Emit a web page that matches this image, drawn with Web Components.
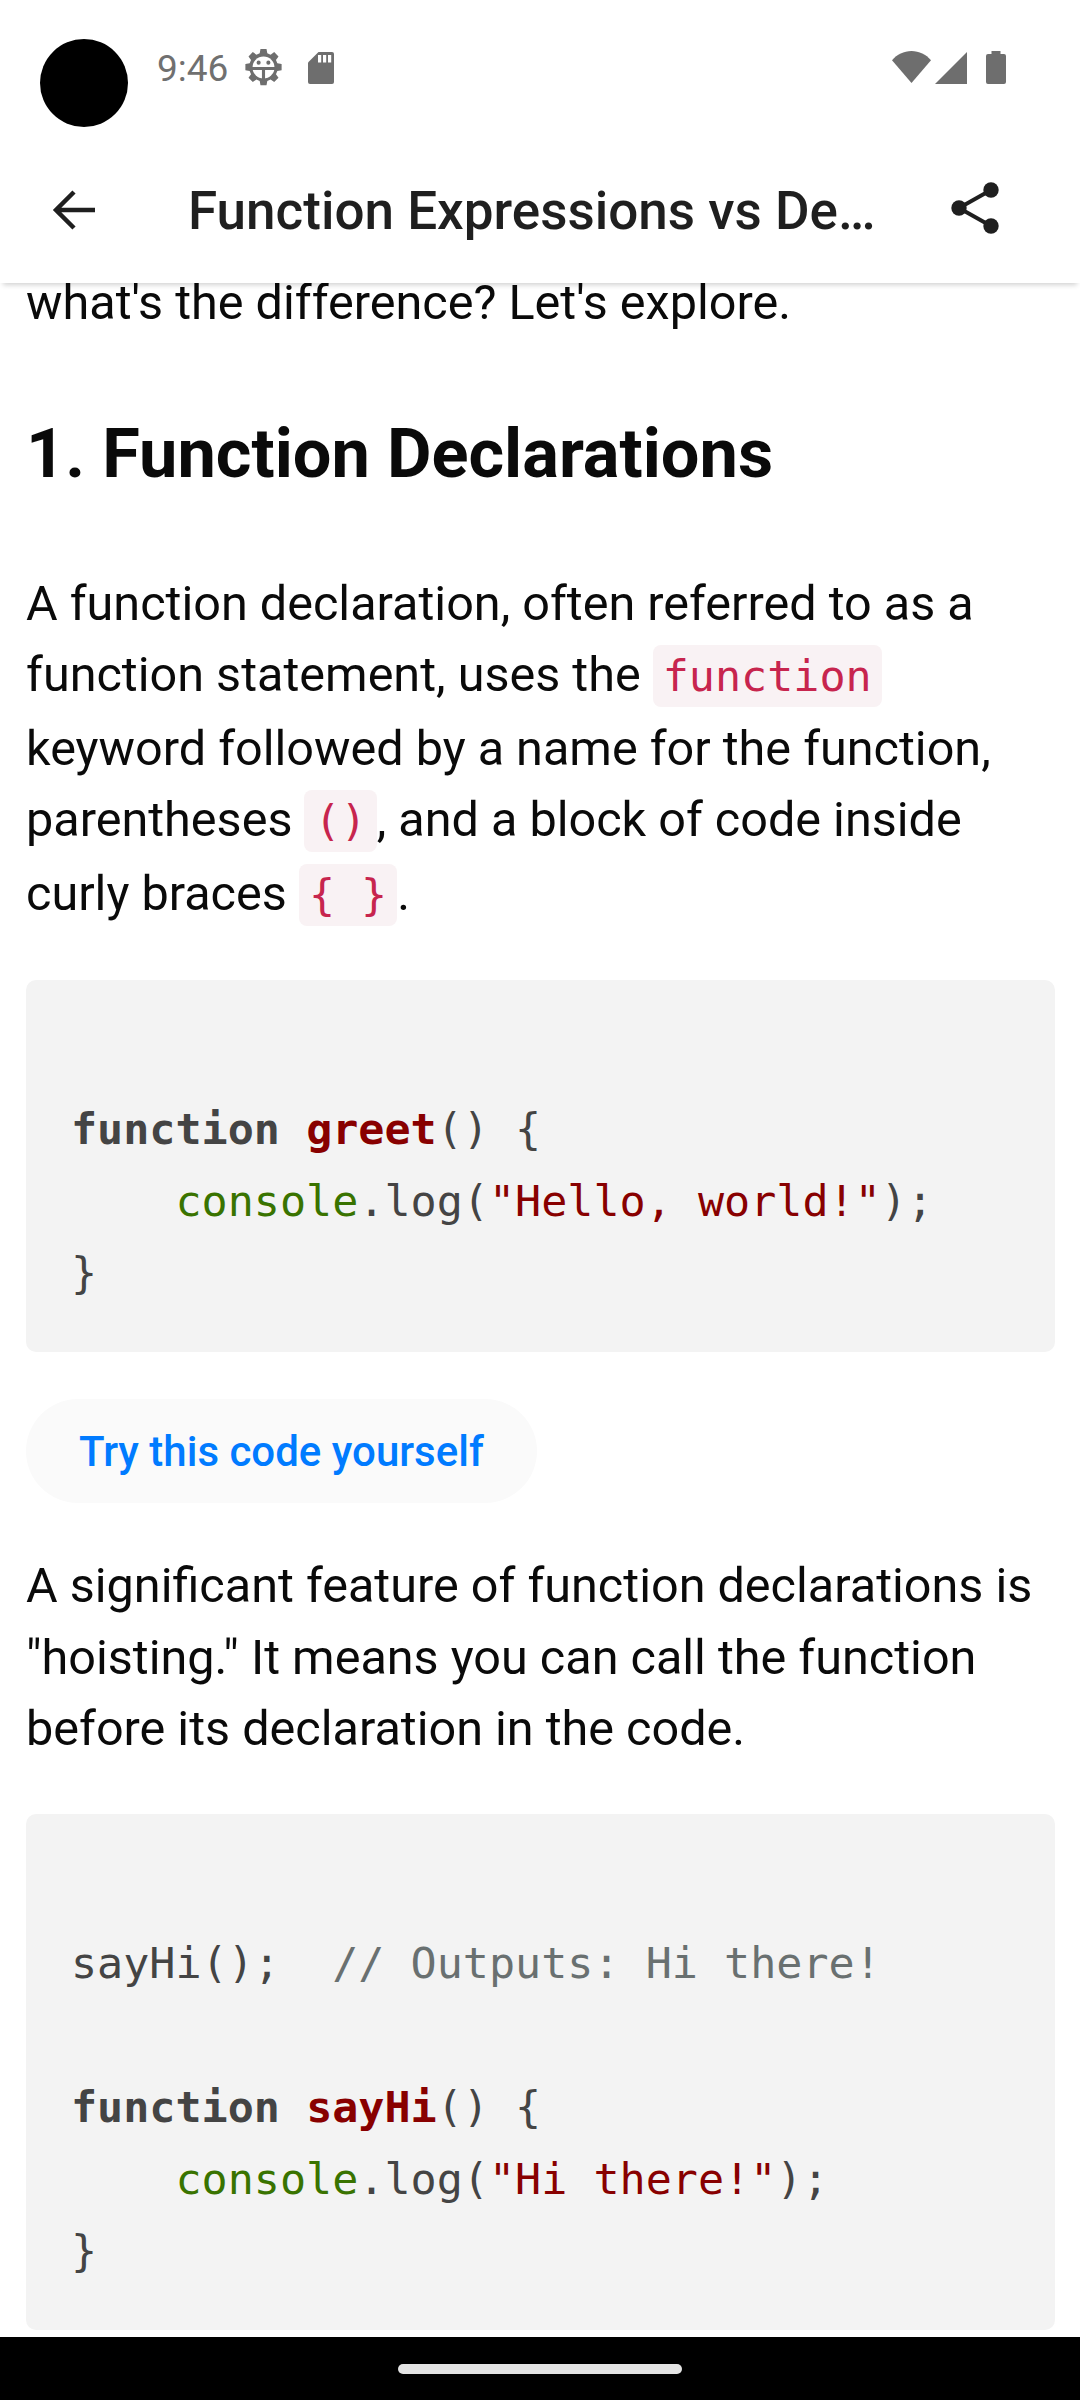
<!DOCTYPE html>
<html>
<head>
<meta charset="utf-8">
<title>Function Expressions vs Declarations</title>
<style>
    html, body { margin: 0; padding: 0; background: #fff; }
    body { width: 1080px; height: 2400px; overflow: hidden; display: flex; flex-direction: column; font-family: Roboto, "Noto Sans", sans-serif; }
</style>
</head>
<body>
<status-bar time="9:46"></status-bar>
<app-bar title="Function Expressions vs Declarations"></app-bar>
<article-view>
    <article-text>what's the difference? Let's explore.</article-text>
    <article-heading>1. Function Declarations</article-heading>
    <article-text>A function declaration, often referred to as a function statement, uses the <inline-code>function</inline-code> keyword followed by a name for the function, parentheses <inline-code>()</inline-code>, and a block of code inside curly braces <inline-code>{ }</inline-code>.</article-text>
    <code-block>
<code-token type="keyword">function</code-token> <code-token type="title">greet</code-token>() {
    <code-token type="builtin">console</code-token>.log(<code-token type="string">"Hello, world!"</code-token>);
}</code-block>
    <try-button>Try this code yourself</try-button>
    <article-text>A significant feature of function declarations is "hoisting." It means you can call the function before its declaration in the code.</article-text>
    <code-block>
sayHi();  <code-token type="comment">// Outputs: Hi there!</code-token>

<code-token type="keyword">function</code-token> <code-token type="title">sayHi</code-token>() {
    <code-token type="builtin">console</code-token>.log(<code-token type="string">"Hi there!"</code-token>);
}</code-block>
</article-view>
<nav-bar></nav-bar>

<script>
class StatusBar extends HTMLElement
{
    constructor()
    {
        super();
        const Shadow = this.attachShadow({mode: "open"});
        Shadow.innerHTML = `
        <style>
            :host { display: flex; align-items: flex-start; height: 145px; flex: none; background: #fff; color: #707070; font-family: Roboto, sans-serif; }
            .camera { width: 88px; height: 88px; border-radius: 50%; background: #000; margin: 39px 0 0 40px; flex: none; }
            .time { font-size: 37px; line-height: 44px; margin: 47px 0 0 29px; }
            .right { display: flex; align-items: flex-start; margin-left: auto; padding: 51px 74px 0 0; }
            svg { display: block; fill: #6e6e6e; flex: none; }
            .gear { margin: 49px 0 0 17px; }
            .sd { margin: 52px 0 0 26px; }
            .signal { margin: 1px 0 0 4px; }
            .battery { margin-left: 19px; }
        </style>
        <div class="camera"></div>
        <div class="time"></div>
        <svg class="gear" width="37" height="37" viewBox="0 0 38 38">
            <path d="M15.900 0h6.200l.8 4.400 3.400 1.400 3.700-2.600 4.400 4.400-2.600 3.700 1.400 3.400 4.400.8v6.200l-4.400.8-1.400 3.400 2.600 3.700-4.400 4.400-3.700-2.600-3.400 1.400-.8 4.400h-6.200l-.8-4.400-3.400-1.400-3.700 2.600-4.400-4.400 2.600-3.700-1.400-3.400-4.400-.8v-6.200l4.400-.8 1.400-3.400-2.600-3.700 4.400-4.400 3.700 2.600 3.400-1.400z"/>
            <circle cx="19" cy="19" r="11.300" fill="#fff"/>
            <path d="M6 20h26M19 20v12" fill="none" stroke="#6e6e6e" stroke-width="3.200"/>
            <circle cx="14" cy="14" r="2.100"/>
            <circle cx="24" cy="14" r="2.100"/>
        </svg>
        <svg class="sd" width="26" height="32" viewBox="0 0 26 32">
            <path d="M10.500 0H24a2 2 0 0 1 2 2v28a2 2 0 0 1-2 2H2a2 2 0 0 1-2-2V10.500z"/>
            <rect x="10" y="3" width="3.200" height="7.500" fill="#fff"/>
            <rect x="15" y="3" width="3.200" height="7.500" fill="#fff"/>
            <rect x="20" y="3" width="3.200" height="7.500" fill="#fff"/>
        </svg>
        <div class="right">
            <svg class="wifi" width="39" height="32" viewBox="0 0 39 32"><path d="M0 9.200C5 3.500 11.800 0 19.500 0S34 3.500 39 9.200L19.500 32z"/></svg>
            <svg class="signal" width="32" height="32" viewBox="0 0 32 32"><path d="M32 0v32H0z"/></svg>
            <svg class="battery" width="20" height="33" viewBox="0 0 20 33"><path d="M5.500 0h9v3H18a2 2 0 0 1 2 2v26a2 2 0 0 1-2 2H2a2 2 0 0 1-2-2V5a2 2 0 0 1 2-2h3.500z"/></svg>
        </div>
        `;
        Shadow.querySelector(".time").textContent = this.getAttribute("time");
    }
}
customElements.define("status-bar", StatusBar);

class AppBar extends HTMLElement
{
    constructor()
    {
        super();
        const Shadow = this.attachShadow({mode: "open"});
        Shadow.innerHTML = `
        <style>
            :host { display: flex; align-items: center; box-sizing: border-box; height: 138px; padding-bottom: 8px; flex: none; position: relative; z-index: 1; background: #fff; box-shadow: 0 5px 5px -3px rgba(0,0,0,.18); color: #1f1f1f; font-family: Roboto, sans-serif; }
            svg { display: block; flex: none; }
            .back { margin-left: 48px; }
            .title { margin: 2px 0 0 92px; width: 695px; font-size: 53px; font-weight: 500; white-space: nowrap; overflow: hidden; text-overflow: ellipsis; }
            .share { margin: -4px 0 0 68px; }
        </style>
        <svg class="back" width="48" height="48" viewBox="0 0 48 48" fill="none" stroke="#1f1f1f" stroke-width="4.500"><path d="M47 24H8M26 6 8 24l18 18"/></svg>
        <div class="title"></div>
        <svg class="share" width="48" height="52" viewBox="0 0 48 52" fill="#1f1f1f">
            <path d="M40 8 8 26l32 18" fill="none" stroke="#1f1f1f" stroke-width="4"/>
            <circle cx="40" cy="8" r="7.700"/><circle cx="8" cy="26" r="7.700"/><circle cx="40" cy="44" r="7.700"/>
        </svg>
        `;
        Shadow.querySelector(".title").textContent = this.getAttribute("title");
    }
}
customElements.define("app-bar", AppBar);

class ArticleView extends HTMLElement
{
    constructor()
    {
        super();
        const Shadow = this.attachShadow({mode: "open"});
        Shadow.innerHTML = `
        <style>
            :host { display: block; flex: 1; min-height: 0; overflow: hidden; background: #fff; color: #0a0a0a; font-family: Roboto, sans-serif; }
            .scroll { margin: -16px 25px 0 26px; display: flex; flex-direction: column; }
        </style>
        <div class="scroll"><slot></slot></div>
        `;
    }
}
customElements.define("article-view", ArticleView);

class ArticleText extends HTMLElement
{
    constructor()
    {
        super();
        const Shadow = this.attachShadow({mode: "open"});
        Shadow.innerHTML = `<style>:host { display: block; font-size: 48.550px; line-height: 71.500px; margin-bottom: 49px; }</style><slot></slot>`;
    }
}
customElements.define("article-text", ArticleText);

class ArticleHeading extends HTMLElement
{
    constructor()
    {
        super();
        const Shadow = this.attachShadow({mode: "open"});
        Shadow.innerHTML = `<style>:host { display: block; font-size: 68.500px; line-height: 80px; font-weight: 700; margin: 26px 0 74px; }</style><slot></slot>`;
    }
}
customElements.define("article-heading", ArticleHeading);

class InlineCode extends HTMLElement
{
    constructor()
    {
        super();
        // 这里不能留空白，否则会多出一个空格
        const Shadow = this.attachShadow({mode: "open"});
        Shadow.innerHTML = `<style>:host { display: inline; font-family: "DejaVu Sans Mono", monospace; font-size: 43.400px; color: #c7254e; background: #f9f2f4; padding: 6px 10px; border-radius: 8px; }</style><slot></slot>`;
    }
}
customElements.define("inline-code", InlineCode);

class CodeBlock extends HTMLElement
{
    constructor()
    {
        super();
        // white-space: pre 会继承，模板里的换行也会被画出来
        const Shadow = this.attachShadow({mode: "open"});
        Shadow.innerHTML = `<style>:host { display: block; background: #f3f3f3; border-radius: 10px; padding: 41px 46px 43px 45px; margin-bottom: 47px; color: #444; font-family: "DejaVu Sans Mono", monospace; font-size: 43.400px; line-height: 72px; white-space: pre; }</style><slot></slot>`;
    }
}
customElements.define("code-block", CodeBlock);

class CodeToken extends HTMLElement
{
    constructor()
    {
        super();
        const Shadow = this.attachShadow({mode: "open"});
        Shadow.innerHTML = `<style>:host { display: inline; } :host([type="keyword"]) { font-weight: 700; } :host([type="title"]) { font-weight: 700; color: #880000; } :host([type="string"]) { color: #880000; } :host([type="builtin"]) { color: #397300; } :host([type="comment"]) { color: #697070; }</style><slot></slot>`;
    }
}
customElements.define("code-token", CodeToken);

class TryButton extends HTMLElement
{
    constructor()
    {
        super();
        const Shadow = this.attachShadow({mode: "open"});
        Shadow.innerHTML = `<style>:host { display: flex; align-items: center; align-self: flex-start; height: 104px; padding: 0 53px; border-radius: 52px; background: #fafafa; color: #007bff; font-size: 42px; font-weight: 500; margin-bottom: 47px; }</style><slot></slot>`;
    }
}
customElements.define("try-button", TryButton);

class NavBar extends HTMLElement
{
    constructor()
    {
        super();
        const Shadow = this.attachShadow({mode: "open"});
        Shadow.innerHTML = `
        <style>
            :host { display: flex; align-items: center; justify-content: center; height: 63px; flex: none; background: #000; }
            .pill { width: 284px; height: 10px; border-radius: 5px; background: #e4e4e4; }
        </style>
        <div class="pill"></div>
        `;
    }
}
customElements.define("nav-bar", NavBar);
</script>
</body>
</html>
